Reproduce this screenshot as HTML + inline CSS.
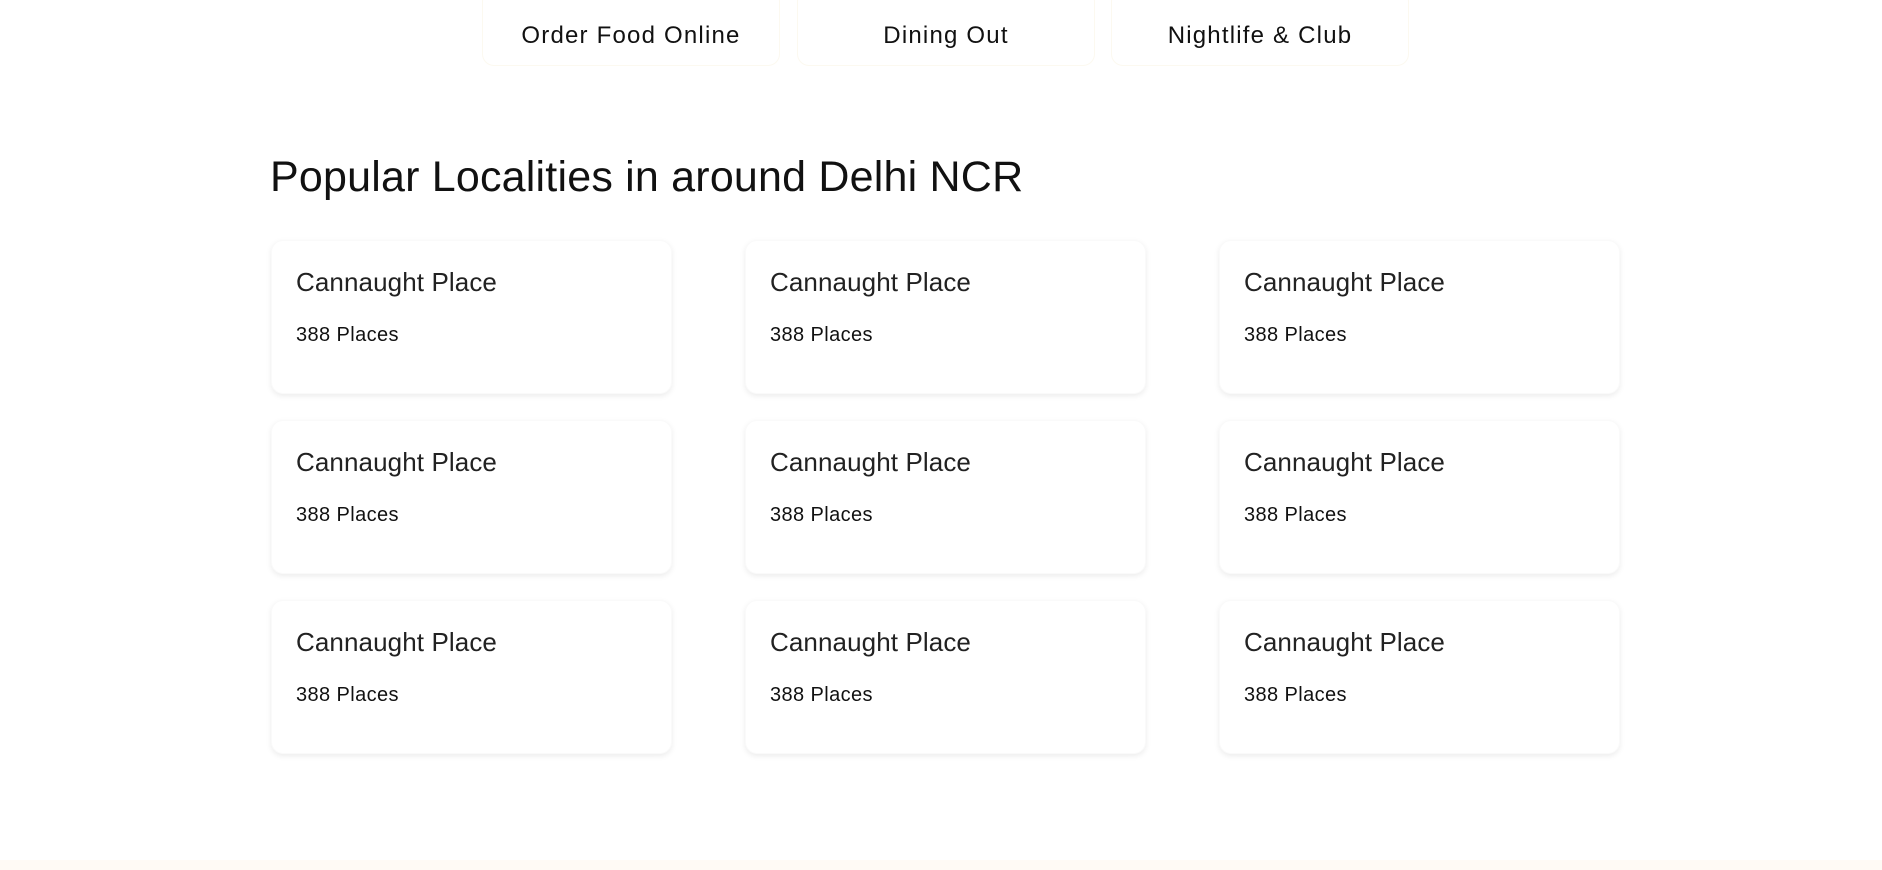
<!DOCTYPE html>
<html><head><meta charset="utf-8"><style>
*{margin:0;padding:0;box-sizing:border-box}
body{width:1882px;height:870px;background:#fff;font-family:"Liberation Sans",sans-serif;color:#1c1c1c;position:relative;overflow:hidden}
.btn{position:absolute;top:-10px;height:76px;width:298px;background:#fff;border:1px solid #fcf9f0;border-radius:12px;display:flex;align-items:center;justify-content:center;padding-top:16px;font-size:24px;letter-spacing:1.2px;color:#111}
h1{position:absolute;left:270px;top:153px;font-size:43px;font-weight:normal;color:#111;letter-spacing:0.2px}
.card{position:absolute;width:401px;height:154px;background:#fff;border-radius:12px;box-shadow:0 2px 6px rgba(0,0,0,0.08);border:1px solid #fafafa}
.card .t{position:absolute;left:24px;top:26px;font-size:26px;letter-spacing:0.1px;color:#222}
.card .s{position:absolute;left:24px;top:83px;font-size:20px;letter-spacing:0.4px;color:#111}
.foot{position:absolute;left:0;top:860px;width:1882px;height:10px;background:#fffaf5}
</style></head><body>
<div class="btn" style="left:482px">Order Food Online</div>
<div class="btn" style="left:797px">Dining Out</div>
<div class="btn" style="left:1111px">Nightlife &amp; Club</div>
<h1>Popular Localities in around Delhi NCR</h1>

<div class="card" style="left:271px;top:240px"><div class="t">Cannaught Place</div><div class="s">388 Places</div></div>
<div class="card" style="left:745px;top:240px"><div class="t">Cannaught Place</div><div class="s">388 Places</div></div>
<div class="card" style="left:1219px;top:240px"><div class="t">Cannaught Place</div><div class="s">388 Places</div></div>
<div class="card" style="left:271px;top:420px"><div class="t">Cannaught Place</div><div class="s">388 Places</div></div>
<div class="card" style="left:745px;top:420px"><div class="t">Cannaught Place</div><div class="s">388 Places</div></div>
<div class="card" style="left:1219px;top:420px"><div class="t">Cannaught Place</div><div class="s">388 Places</div></div>
<div class="card" style="left:271px;top:600px"><div class="t">Cannaught Place</div><div class="s">388 Places</div></div>
<div class="card" style="left:745px;top:600px"><div class="t">Cannaught Place</div><div class="s">388 Places</div></div>
<div class="card" style="left:1219px;top:600px"><div class="t">Cannaught Place</div><div class="s">388 Places</div></div>
<div class="foot"></div>
</body></html>
